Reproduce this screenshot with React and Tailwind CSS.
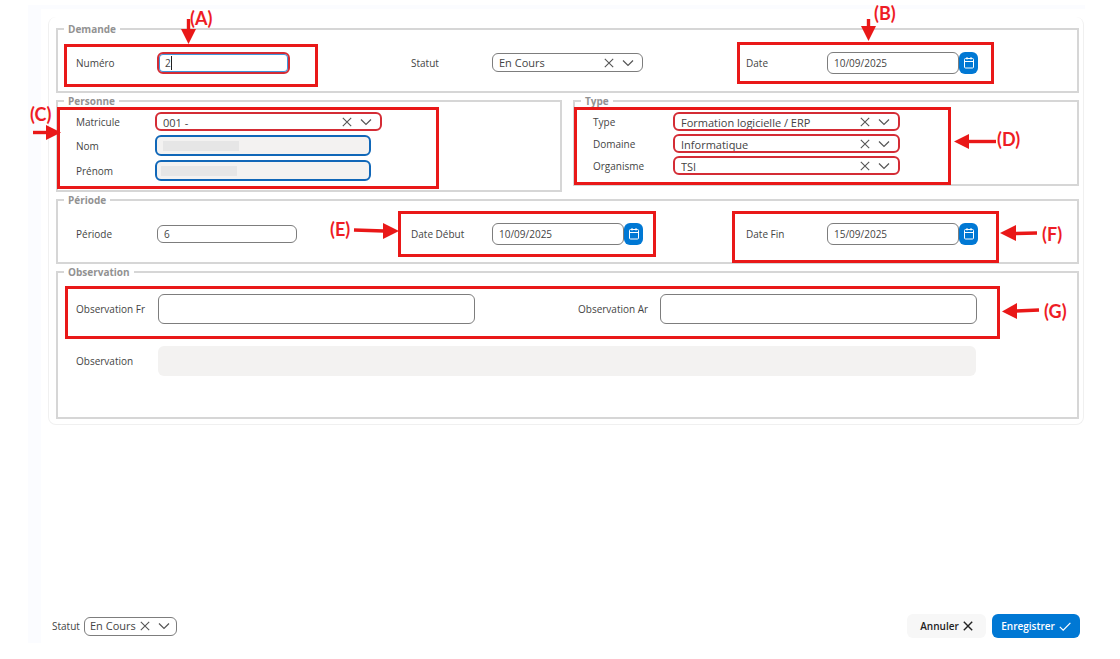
import React, { useId, useState } from "react";

const TONES = {
  plain: "border border-[#7d7d7d] bg-white",
  red: "border-2 border-[#d42c35] bg-white",
};

function CloseIcon({ className }) {
  return (
    <svg viewBox="0 0 10 10" className={className} fill="none" stroke="currentColor" strokeWidth="1.1" aria-hidden="true">
      <path d="M0.8 0.8 9.2 9.2M9.2 0.8 0.8 9.2" />
    </svg>
  );
}

function ChevronIcon({ className }) {
  return (
    <svg viewBox="0 0 12 10" className={className} fill="none" stroke="currentColor" strokeWidth="1.2" aria-hidden="true">
      <path d="M1 2.5 6 7.5 11 2.5" />
    </svg>
  );
}

function CalendarIcon() {
  return (
    <svg viewBox="0 0 12 12" className="size-3" fill="none" stroke="currentColor" strokeWidth="1" aria-hidden="true">
      <rect x="1.5" y="1.5" width="9" height="9.500" rx="1" />
      <path d="M1.5 4.5h9M4 0v2.500M8 0v2.500" />
    </svg>
  );
}

function Group({ title, children }) {
  return (
    <fieldset className="min-w-0 border-2 border-[#d6d6d6]">
      <legend className="ml-1.5 px-1 text-[10px] leading-[14px] font-bold text-[#929292]">{title}</legend>
      {children}
    </fieldset>
  );
}

function Combo({ id, value, tone = "plain", box, inner = "pl-1.5 pr-2" }) {
  const [current, setCurrent] = useState(value);
  return (
    <div className={`flex h-[19px] items-center overflow-hidden rounded-md ${TONES[tone]} ${box} ${inner}`}>
      <select
        id={id}
        value={current}
        onChange={(e) => setCurrent(e.target.value)}
        className={`h-full min-w-0 flex-1 appearance-none bg-transparent text-[11px] text-[#444] outline-none ${tone === "red" ? "pt-0.5" : ""}`}
      >
        <option value={value}>{value}</option>
        <option value="" />
      </select>
      <button type="button" aria-label="Effacer" onClick={() => setCurrent("")} className="text-[#555]">
        <CloseIcon className="size-2.5" />
      </button>
      <ChevronIcon className="ml-2 h-2.5 w-3 text-[#555]" />
    </div>
  );
}

function Field({ label, labelWidth = "w-[81px]", className = "", children }) {
  const id = useId();
  return (
    <div className={`relative flex items-center ${className}`}>
      <label htmlFor={id} className={`shrink-0 whitespace-nowrap ${labelWidth}`}>
        {label}
      </label>
      {children(id)}
    </div>
  );
}

function DateInput({ id, value }) {
  return (
    <div className="flex">
      <input
        id={id}
        defaultValue={value}
        className="h-[22px] w-[132px] rounded-md border border-[#7d7d7d] bg-white pl-1.5 text-[10px] outline-none"
      />
      <button
        type="button"
        aria-label="Choisir une date"
        className="flex h-[22px] w-[19px] items-center justify-center rounded-md bg-[#0078d4] text-white"
      >
        <CalendarIcon />
      </button>
    </div>
  );
}

function ReadOnly({ id, bar }) {
  return (
    <div className="flex h-[21px] w-[216px] items-center overflow-hidden rounded-md border-2 border-[#1067b8] bg-[#f3f2f1]">
      <span className={`h-2.5 w-[76px] shrink-0 bg-[#e6e6e6] ${bar}`} />
      <input id={id} readOnly className="min-w-0 flex-1 bg-transparent outline-none" />
    </div>
  );
}

function Notes({ id }) {
  return (
    <textarea
      id={id}
      className="block h-[30px] w-[317px] resize-none rounded-md border border-[#7d7d7d] bg-white px-1.5 outline-none"
    />
  );
}

function Callout({ letter, frame, label, stem, head }) {
  return (
    <div className={`pointer-events-none absolute z-10 ${frame}`}>
      <div className="size-full border-3 border-[#e91818]" />
      <svg className="absolute top-0 left-0 size-px overflow-visible" aria-hidden="true">
        <path d={stem} stroke="#e91818" strokeWidth="3.4" fill="none" />
        <path d={head} fill="#e91818" />
      </svg>
      <span className={`absolute font-[Lato,sans-serif] text-lg leading-5 font-bold whitespace-nowrap text-[#ee1c25] ${label}`}>
        ({letter})
      </span>
    </div>
  );
}

export default function App() {
  return (
    <div className="flex min-h-screen flex-col bg-white pt-[5px] pr-[35px] pb-4 pl-7 font-['Open_Sans','Noto_Sans',sans-serif] text-[10px] leading-[14px] text-[#444]">
      <div className="h-1 bg-[#fbfcff]" />
      <div className="flex flex-1">
        <div className="w-[13px] shrink-0 bg-[#fbfcff]" />
        <main className="flex min-w-0 flex-1 flex-col pt-2 pl-[7px]">
          <form className="flex flex-1 flex-col" onSubmit={(e) => e.preventDefault()}>
            <div className="mr-px flex flex-col gap-px rounded-lg border border-t-0 border-[#f0f0f0] pt-[5px] pr-1 pb-[5px] pl-[7px]">
              <Group title="Demande">
                <div className="grid h-[55px] grid-cols-[1fr_1fr_331px] pb-0.5 pl-[18px]">
                  <Field label="Numéro">
                    {(id) => (
                      <div className="relative">
                        <input
                          id={id}
                          defaultValue="2"
                          className="block h-[22px] w-[133px] rounded-md border-2 border-[#d42c35] bg-white pl-1.5 text-[10px] ring-1 ring-[#3f97dd] outline-none ring-inset"
                        />
                        <span className="absolute top-1 left-3.5 h-3.5 w-px bg-[#222]" />
                        <Callout
                          letter="A"
                          frame="-top-2 -left-[93px] h-[43px] w-[254px]"
                          label="-top-[36px] left-[126px]"
                          stem="M124.500 -25V-14"
                          head="M117 -15H132L124.500 0Z"
                        />
                      </div>
                    )}
                  </Field>
                  <Field label="Statut">{(id) => <Combo id={id} value="En Cours" box="w-[151px]" />}</Field>
                  <Field label="Date">
                    {(id) => (
                      <>
                        <DateInput id={id} value="10/09/2025" />
                        <Callout
                          letter="B"
                          frame="top-1.5 -left-[9px] h-[42px] w-[257px]"
                          label="-top-[39px] left-[137px]"
                          stem="M131.500 -23V-15"
                          head="M124 -16H139L131.500 -1Z"
                        />
                      </>
                    )}
                  </Field>
                </div>
              </Group>

              <div className="grid grid-cols-2 items-start gap-[11px]">
                <Group title="Personne">
                  <div className="relative flex flex-col gap-1 pt-1 pb-[9px] pl-[18px]">
                    <Field label="Matricule" labelWidth="w-[79px]">
                      {(id) => <Combo id={id} value="001 -" tone="red" box="w-[227px]" />}
                    </Field>
                    <Field label="Nom" labelWidth="w-[79px]">
                      {(id) => <ReadOnly id={id} bar="ml-1.5" />}
                    </Field>
                    <Field label="Prénom" labelWidth="w-[79px]">
                      {(id) => <ReadOnly id={id} bar="ml-1" />}
                    </Field>
                    <Callout
                      letter="C"
                      frame="-top-px -left-px h-[82px] w-[382px]"
                      label="-top-[3px] -left-[27px]"
                      stem="M-24 25.500H-10"
                      head="M-11 18V33L4 25.500Z"
                    />
                  </div>
                </Group>
                <Group title="Type">
                  <div className="relative flex flex-col gap-[3px] pt-1 pb-[9px] pl-[18px]">
                    <Field label="Type" labelWidth="w-20">
                      {(id) => <Combo id={id} value="Formation logicielle / ERP" tone="red" box="w-[227px]" />}
                    </Field>
                    <Field label="Domaine" labelWidth="w-20">
                      {(id) => <Combo id={id} value="Informatique" tone="red" box="w-[227px]" />}
                    </Field>
                    <Field label="Organisme" labelWidth="w-20">
                      {(id) => <Combo id={id} value="TSI" tone="red" box="w-[227px]" />}
                    </Field>
                    <Callout
                      letter="D"
                      frame="-top-px -left-px h-[78px] w-[377px]"
                      label="top-[22px] left-[423px]"
                      stem="M394 34.500H422"
                      head="M395 27V42L380 34.500Z"
                    />
                  </div>
                </Group>
              </div>

              <Group title="Période">
                <div className="grid h-[55px] grid-cols-[1fr_1fr_331px] pb-0.5 pl-[18px]">
                  <Field label="Période">
                    {(id) => (
                      <input
                        id={id}
                        defaultValue="6"
                        className="h-[18px] w-[140px] rounded-md border border-[#7d7d7d] bg-white pl-1.5 text-[10px] outline-none"
                      />
                    )}
                  </Field>
                  <Field label="Date Début">
                    {(id) => (
                      <>
                        <DateInput id={id} value="10/09/2025" />
                        <Callout
                          letter="E"
                          frame="top-1 -left-[13px] h-[46px] w-[258px]"
                          label="top-[8px] -left-[68px]"
                          stem="M-44 19L-14 20"
                          head="M-15 12V28L1 20Z"
                        />
                      </>
                    )}
                  </Field>
                  <Field label="Date Fin">
                    {(id) => (
                      <>
                        <DateInput id={id} value="15/09/2025" />
                        <Callout
                          letter="F"
                          frame="top-1 -left-[14px] h-[52px] w-[267px]"
                          label="top-[13px] left-[310px]"
                          stem="M283 22.500L305 22"
                          head="M284 14V30L268 22Z"
                        />
                      </>
                    )}
                  </Field>
                </div>
              </Group>

              <Group title="Observation">
                <div className="relative flex flex-col gap-[22px] pt-[15px] pb-[41px] pl-[18px]">
                  <div className="grid grid-cols-[1fr_499px]">
                    <Field label="Observation Fr" labelWidth="w-[82px]">
                      {(id) => <Notes id={id} />}
                    </Field>
                    <Field label="Observation Ar" labelWidth="w-[82px]">
                      {(id) => <Notes id={id} />}
                    </Field>
                  </div>
                  <Field label="Observation" labelWidth="w-[82px]" className="pr-[101px]">
                    {(id) => (
                      <textarea
                        id={id}
                        readOnly
                        className="block h-[30px] min-w-0 flex-1 resize-none rounded-md bg-[#f3f2f1] outline-none"
                      />
                    )}
                  </Field>
                  <Callout
                    letter="G"
                    frame="top-[7px] left-[7px] h-[53px] w-[935px]"
                    label="top-[15px] left-[979px]"
                    stem="M951 25L974 24"
                    head="M952 17V33L937 25.500Z"
                  />
                </div>
              </Group>
            </div>

            <footer className="mt-auto flex items-center justify-between pr-[5px] pb-[5px] pl-1">
              <Field label="Statut" labelWidth="w-8">
                {(id) => <Combo id={id} value="En Cours" box="w-[93px]" inner="pl-[5px] pr-1.5" />}
              </Field>
              <div className="flex gap-1.5">
                <button
                  type="button"
                  className="flex h-6 w-[79px] items-center justify-center gap-1 rounded-md bg-[#f7f7f7] text-[10px] font-semibold text-[#222]"
                >
                  Annuler
                  <CloseIcon className="size-2.5 stroke-[1.4]" />
                </button>
                <button
                  type="submit"
                  className="flex h-6 w-[88px] items-center justify-center gap-1 rounded-md bg-[#0078d4] text-[10px] font-semibold text-white"
                >
                  Enregistrer
                  <svg viewBox="0 0 12 9" className="h-[9px] w-3" fill="none" stroke="currentColor" strokeWidth="1.2" aria-hidden="true">
                    <path d="M0.800 4.800 4.200 8.200 11.400 0.800" />
                  </svg>
                </button>
              </div>
            </footer>
          </form>
        </main>
      </div>
    </div>
  );
}
